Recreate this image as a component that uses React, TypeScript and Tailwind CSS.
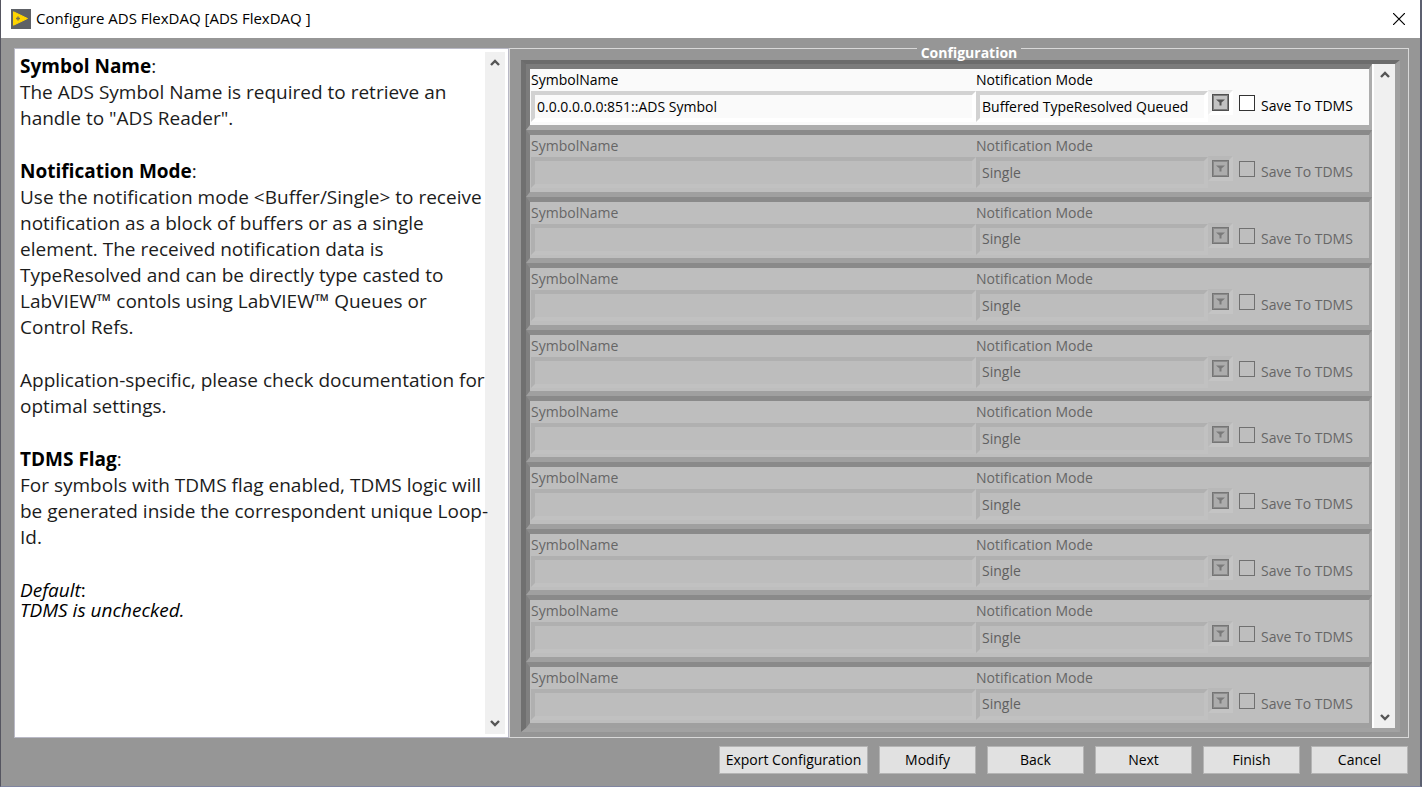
import { useState } from "react";

type Row = { symbol: string; mode: string; enabled: boolean };

const rows: Row[] = [
  { symbol: "0.0.0.0.0.0:851::ADS Symbol", mode: "Buffered TypeResolved Queued", enabled: true },
  ...Array.from({ length: 9 }, () => ({ symbol: "", mode: "Single", enabled: false })),
];

function Chevron({ up }: { up?: boolean }) {
  return (
    <svg width="10" height="8" viewBox="0 0 10 8" fill="none" aria-hidden="true">
      <path d={up ? "M1 6 L5 2 L9 6" : "M1 2 L5 6 L9 2"} stroke="#555555" strokeWidth="2.4" />
    </svg>
  );
}

function ScrollBar({ className }: { className: string }) {
  return (
    <div className={`flex shrink-0 flex-col justify-between bg-[#f0f0f0] ${className}`}>
      <button type="button" aria-label="Scroll up" className="flex h-[22px] w-full items-center justify-center">
        <Chevron up />
      </button>
      <button type="button" aria-label="Scroll down" className="flex h-[22px] w-full items-center justify-center">
        <Chevron />
      </button>
    </div>
  );
}

function SymbolRow({ row, index }: { row: Row; index: number }) {
  const [saved, setSaved] = useState(false);
  const [symbol, setSymbol] = useState(row.symbol);
  const on = row.enabled;
  const field = on
    ? "border-t-[#d2d2d2] border-l-[#d2d2d2] border-r-white border-b-white bg-[#fafafa] text-black"
    : "border-t-[#b0b0b0] border-l-[#b0b0b0] border-r-[#c1c1c1] border-b-[#c1c1c1] bg-[#bdbdbd] text-[#606060]";
  return (
    <div
      className={`flex min-h-[66px] flex-1 border-t-[5px] border-r-[3px] border-b-[5px] border-l-4 ${
        on
          ? "border-t-[#7c7c7c] border-r-[#adadad] border-b-[#adadad] border-l-[#7c7c7c] bg-[#fafafa] text-black"
          : "border-t-[#8a8a8a] border-r-[#9f9f9f] border-b-[#a0a0a0] border-l-[#808080] bg-[#bebebe] text-[#666666]"
      }`}
    >
      <div className="flex min-w-0 flex-1 flex-col pl-px">
        <label htmlFor={`symbol-${index}`} className="h-[22px] leading-[22px]">
          SymbolName
        </label>
        <input
          id={`symbol-${index}`}
          value={symbol}
          onChange={(e) => setSymbol(e.target.value)}
          disabled={!on}
          className={`h-[31px] w-full border-4 px-0.5 outline-none ${field}`}
        />
      </div>
      <div className="flex w-[232px] flex-col">
        <label htmlFor={`mode-${index}`} className="h-[22px] leading-[22px]">
          Notification Mode
        </label>
        <select
          id={`mode-${index}`}
          defaultValue={row.mode}
          disabled={!on}
          className={`h-[31px] w-full appearance-none border-4 px-0.5 opacity-100 outline-none ${field}`}
        >
          <option>Single</option>
          <option>Buffered TypeResolved Queued</option>
        </select>
      </div>
      <div
        aria-hidden="true"
        className={`mt-[21px] size-[25px] border-4 ${
          on
            ? "border-t-[#e6e6e6] border-r-white border-b-white border-l-[#f0f0f0]"
            : "border-t-[#b8b8b8] border-r-[#c4c4c4] border-b-[#c4c4c4] border-l-[#bababa]"
        }`}
      >
        <svg width="17" height="17" viewBox="0 0 17 17">
          <rect x="0.5" y="0.5" width="16" height="16" fill={on ? "#b4b4b4" : "#a6a6a6"} stroke={on ? "#505050" : "#757575"} />
          <rect x="1.5" y="1.5" width="14" height="14" fill={on ? "#c2c2c2" : "#acacac"} stroke={on ? "#7d7d7d" : "#8a8a8a"} />
          <path d="M4 5.5 H13 L9.5 8.5 V11.5 H7.5 V8.5 Z" fill={on ? "#555555" : "#7a7a7a"} />
        </svg>
      </div>
      <label className="flex w-[136px] items-start pl-1.5">
        <input
          type="checkbox"
          checked={saved}
          onChange={(e) => setSaved(e.target.checked)}
          disabled={!on}
          className={`mt-[26px] size-4 shrink-0 appearance-none border ${
            on ? "border-[#333333] bg-white checked:bg-[#333333]" : "border-[#707070] bg-[#bebebe]"
          }`}
        />
        <span className="mt-[26px] ml-1.5 leading-[22px] whitespace-nowrap">Save To TDMS</span>
      </label>
    </div>
  );
}

const actions = ["Modify", "Back", "Next", "Finish", "Cancel"];

export default function App() {
  return (
    <div className="flex min-h-screen flex-col border-r-2 border-b border-l border-r-[#5c6070] border-b-[#8085a0] border-l-[#555560] bg-[#969696] font-['Open_Sans','Noto_Sans',sans-serif] text-sm text-black">
      <header className="flex h-[38px] items-center bg-white pr-[13px] pl-2.5">
        <svg width="20" height="20" viewBox="0 0 20 20" aria-hidden="true">
          <rect width="20" height="20" fill="#5e6166" />
          <path d="M2.5 2.8 L16.5 9.5 L2.5 16.2 Z" fill="#ffd500" stroke="#ffd500" strokeWidth="1" strokeLinejoin="round" />
          <path d="M5 9.5 H9 M7 7.5 V11.5" stroke="#77704a" strokeWidth="1.4" />
        </svg>
        <h1 className="ml-[5px] flex-1 text-[15px]">Configure ADS FlexDAQ [ADS FlexDAQ ]</h1>
        <button type="button" aria-label="Close" className="flex size-4 items-center justify-center">
          <svg width="12" height="12" viewBox="0 0 12 12" aria-hidden="true">
            <path d="M0 0 L12 12 M12 0 L0 12" stroke="#000000" strokeWidth="1.2" />
          </svg>
        </button>
      </header>

      <main className="flex flex-1 pt-2.5 pr-[11px] pl-[13px]">
        <section className="flex w-[495px] shrink-0 border border-[#b9b9c6] bg-white pt-[3px] pr-[3px] pb-[3px] pl-[5px]">
          <article className="relative min-w-0 flex-1 pt-px text-[19px] leading-[26px] text-[#1c1c1c]">
            <h2 className="inline font-bold text-black">Symbol Name</h2>:
            <p className="mb-[27px]">The ADS Symbol Name is required to retrieve an handle to "ADS Reader".</p>
            <h2 className="inline font-bold text-black">Notification Mode</h2>:
            <p className="mb-[27px]">
              Use the notification mode &lt;Buffer/Single&gt; to receive notification as a block of buffers or as a
              single element. The received notification data is TypeResolved and can be directly type casted to
              LabVIEW™ contols using LabVIEW™ Queues or Control Refs.
            </p>
            <p className="-mr-1.5 mb-[27px]">
              Application-specific, please check documentation for optimal settings.
            </p>
            <h2 className="inline font-bold text-black">TDMS Flag</h2>:
            <p className="-mr-1.5 mb-[30px]">
              For symbols with TDMS flag enabled, TDMS logic will be generated inside the correspondent unique Loop-Id.
            </p>
            <p className="leading-5 text-black italic">
              Default<span className="not-italic">:</span>
              <br />
              TDMS is unchecked.
            </p>
          </article>
          <ScrollBar className="w-5" />
        </section>

        <fieldset className="relative flex min-w-0 flex-1 border border-[#d8d8d8] pt-[11px] pr-2 pb-[5px] pl-[11px]">
          <legend className="absolute inset-x-0 -top-[3px] flex justify-center pl-5 leading-[14px] font-bold text-white">
            <span className="bg-[#969696] px-1">Configuration</span>
          </legend>
          <div className="flex flex-1 border-t-4 border-r-[5px] border-b-4 border-l-[5px] border-t-[#6c6c6c] border-r-[#a0a0a0] border-b-[#a2a2a2] border-l-[#707070]">
            <div className="flex min-w-0 flex-1 flex-col">
              {rows.map((row, i) => (
                <SymbolRow key={i} row={row} index={i} />
              ))}
            </div>
            <ScrollBar className="w-[23px] border-l-2 border-white" />
          </div>
        </fieldset>
      </main>

      <footer className="flex justify-end gap-[11px] pt-2 pr-3 pb-3">
        <button type="button" className="h-7 w-[149px] border border-[#b4b4b4] bg-[#e1e1e1] whitespace-nowrap">
          Export Configuration
        </button>
        {actions.map((name) => (
          <button key={name} type="button" className="h-7 w-[97px] border border-[#b4b4b4] bg-[#e1e1e1]">
            {name}
          </button>
        ))}
      </footer>
    </div>
  );
}
